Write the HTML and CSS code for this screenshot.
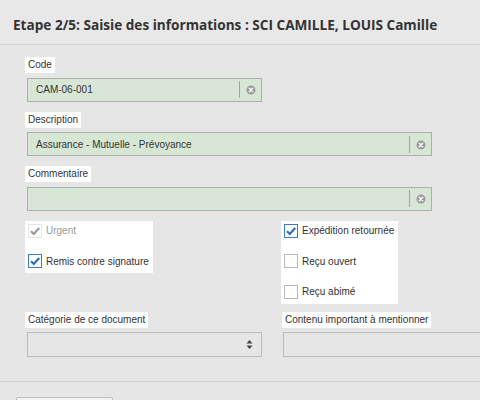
FILE: index.html
```html
<!DOCTYPE html>
<html lang="fr">
<head>
<meta charset="utf-8">
<title>Etape 2/5</title>
<link rel="stylesheet" href="styles.css">
</head>
<body>
<div class="header">
  <h1 class="title">Etape 2/5: Saisie des informations : SCI CAMILLE, LOUIS Camille</h1>
</div>
<div class="form">
  <div class="field">
    <span class="label">Code</span>
    <div class="input green short">
      <span class="value">CAM-06-001</span>
      <span class="sep"></span>
      <span class="clear"><svg width="10" height="10" viewBox="0 0 10 10"><circle cx="5" cy="5" r="4.5" fill="#9b9b9b"/><path d="M3.3 3.3 L6.7 6.7 M6.7 3.3 L3.3 6.7" stroke="#fff" stroke-width="1.4" stroke-linecap="round"/></svg></span>
    </div>
  </div>
  <div class="field">
    <span class="label">Description</span>
    <div class="input green wide">
      <span class="value">Assurance - Mutuelle - Prévoyance</span>
      <span class="sep"></span>
      <span class="clear"><svg width="10" height="10" viewBox="0 0 10 10"><circle cx="5" cy="5" r="4.5" fill="#9b9b9b"/><path d="M3.3 3.3 L6.7 6.7 M6.7 3.3 L3.3 6.7" stroke="#fff" stroke-width="1.4" stroke-linecap="round"/></svg></span>
    </div>
  </div>
  <div class="field">
    <span class="label">Commentaire</span>
    <div class="input green wide">
      <span class="value"></span>
      <span class="sep"></span>
      <span class="clear"><svg width="10" height="10" viewBox="0 0 10 10"><circle cx="5" cy="5" r="4.5" fill="#9b9b9b"/><path d="M3.3 3.3 L6.7 6.7 M6.7 3.3 L3.3 6.7" stroke="#fff" stroke-width="1.4" stroke-linecap="round"/></svg></span>
    </div>
  </div>

  <div class="row">
    <div class="col">
      <div class="panel">
        <div class="check disabled">
          <span class="cb"><svg width="12" height="12" viewBox="0 0 12 12"><path d="M2 6.3 L4.8 9 L10.2 3" fill="none" stroke="#9a9a9a" stroke-width="2.2"/></svg></span>
          <span class="text">Urgent</span>
        </div>
        <div class="check checked">
          <span class="cb"><svg width="12" height="12" viewBox="0 0 12 12"><path d="M2 6.3 L4.8 9 L10.2 3" fill="none" stroke="#2a70b8" stroke-width="2.2"/></svg></span>
          <span class="text">Remis contre signature</span>
        </div>
      </div>
    </div>
    <div class="col">
      <div class="panel">
        <div class="check checked">
          <span class="cb"><svg width="12" height="12" viewBox="0 0 12 12"><path d="M2 6.3 L4.8 9 L10.2 3" fill="none" stroke="#2a70b8" stroke-width="2.2"/></svg></span>
          <span class="text">Expédition retournée</span>
        </div>
        <div class="check">
          <span class="cb"></span>
          <span class="text">Reçu ouvert</span>
        </div>
        <div class="check">
          <span class="cb"></span>
          <span class="text">Reçu abimé</span>
        </div>
      </div>
    </div>
  </div>

  <div class="row row-bottom">
    <div class="col">
      <span class="label">Catégorie de ce document</span>
      <div class="input select short">
        <span class="value"></span>
        <span class="arrows"><svg width="7" height="11" viewBox="0 0 7 11"><path d="M0.5 4.5 L3.5 1 L6.5 4.5 Z M0.5 6.5 L6.5 6.5 L3.5 10 Z" fill="#444"/></svg></span>
      </div>
    </div>
    <div class="col">
      <span class="label label-right">Contenu important à mentionner</span>
      <div class="input plain short"></div>
    </div>
  </div>
</div>
<div class="footer">
  <button class="btn" type="button"></button>
</div>
</body>
</html>
```

FILE: styles.css
```css
html, body {
  margin: 0;
  padding: 0;
  overflow: hidden;
}
body {
  background: #e6e6e6;
  font-family: "Liberation Sans", Arial, sans-serif;
  font-size: 10px;
  color: #333;
  width: 480px;
  height: 400px;
}
.header {
  background: #e8e8e8;
  padding: 14px 0 9px 13px;
  border-bottom: 1px solid #d4d4d4;
}
.title {
  margin: 0;
  font-family: "Open Sans", "Liberation Sans", sans-serif;
  font-weight: 700;
  font-size: 13.6px;
  line-height: 21px;
  color: #333;
  white-space: nowrap;
}
.form {
  padding: 12px 0 0 25px;
}
.field {
  margin-bottom: 10px;
}
.label {
  display: block;
  width: fit-content;
  background: #fff;
  padding: 0 3px;
  height: 16px;
  line-height: 16px;
  font-size: 10px;
  color: #333;
  margin-bottom: 4.5px;
  white-space: nowrap;
}
.label-right {
  margin-left: 1px;
}
.input {
  display: flex;
  align-items: center;
  box-sizing: border-box;
  height: 24px;
  margin-left: 2px;
  border: 1px solid #a9b2a8;
}
.green {
  background: #d8e6d5;
}
.short {
  width: 235px;
}
.wide {
  width: 405px;
}
.value {
  flex: 1;
  padding-left: 8px;
  font-size: 10px;
  color: #333;
  white-space: nowrap;
}
.sep {
  width: 1px;
  height: 17px;
  background: #9ea89d;
}
.clear {
  width: 21px;
  display: flex;
  justify-content: center;
  align-items: center;
  padding-top: 1px;
}
.row {
  display: flex;
  align-items: flex-start;
}
.col {
  width: 256px;
  flex: none;
}
.panel {
  display: inline-flex;
  flex-direction: column;
  gap: 10.5px;
  background: #fff;
  padding: 0 4px 2px 3px;
}
.check {
  display: flex;
  align-items: center;
  gap: 4px;
  height: 20px;
  font-size: 10px;
  color: #333;
  white-space: nowrap;
}
.cb {
  width: 14px;
  height: 14px;
  box-sizing: border-box;
  border: 1px solid #b9b9b9;
  background: #fff;
  display: flex;
  align-items: center;
  justify-content: center;
}
.checked .cb {
  border-color: #3b7dc4;
}
.disabled .cb {
  border-color: #e6e6e6;
}
.disabled .text {
  color: #9a9a9a;
}
.row-bottom {
  margin-top: 8px;
}
.select {
  height: 25px;
  border-color: #bdbdbd;
  background: #e6e6e6;
}
.arrows {
  width: 24px;
  display: flex;
  justify-content: center;
  align-items: center;
}
.plain {
  height: 25px;
  border-color: #bdbdbd;
  background: #e6e6e6;
}
.footer {
  margin-top: 24px;
  border-top: 1px solid #d2d2d2;
  padding: 15px 0 0 16px;
}
.btn {
  display: block;
  width: 97px;
  height: 28px;
  background: #f2f2f2;
  border: 1px solid #bdbdbd;
  border-radius: 2px;
  padding: 0;
}
```
